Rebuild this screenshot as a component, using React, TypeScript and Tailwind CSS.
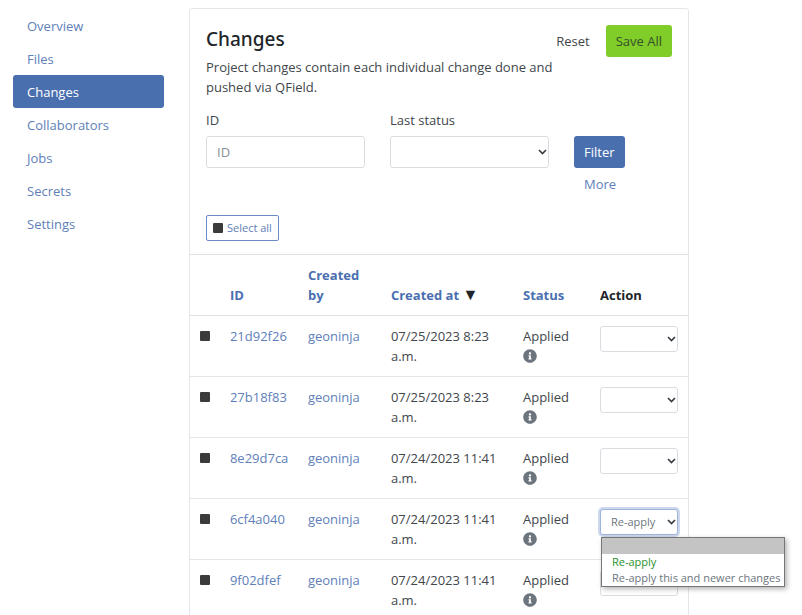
import React from "react";

const navItems = ["Overview", "Files", "Changes", "Collaborators", "Jobs", "Secrets", "Settings"];

const changes = [
  { id: "21d92f26", user: "geoninja", date: "07/25/2023 8:23 a.m.", status: "Applied" },
  { id: "27b18f83", user: "geoninja", date: "07/25/2023 8:23 a.m.", status: "Applied" },
  { id: "8e29d7ca", user: "geoninja", date: "07/24/2023 11:41 a.m.", status: "Applied" },
  { id: "6cf4a040", user: "geoninja", date: "07/24/2023 11:41 a.m.", status: "Applied", open: true },
  { id: "9f02dfef", user: "geoninja", date: "07/24/2023 11:41 a.m.", status: "Applied" },
];

function Chevron() {
  return (
    <svg
      className="pointer-events-none absolute top-1/2 right-[2px] -translate-y-1/2"
      width="9"
      height="7"
      viewBox="0 0 9 7"
      fill="none"
      stroke="#343a40"
      strokeWidth="1.6"
      aria-hidden="true"
    >
      <path d="M1 1.5 L4.5 5 L8 1.5" />
    </svg>
  );
}

function InfoIcon() {
  return (
    <svg width="14" height="14" viewBox="0 0 512 512" fill="#6c757d" aria-hidden="true">
      <path d="M256 8C119 8 8 119.100 8 256c0 137 111 248 248 248s248-111 248-248C504 119.100 393 8 256 8zm0 110c23.200 0 42 18.800 42 42s-18.800 42-42 42-42-18.800-42-42 18.800-42 42-42zm56 254c0 6.600-5.400 12-12 12h-88c-6.600 0-12-5.400-12-12v-24c0-6.600 5.400-12 12-12h12v-64h-12c-6.600 0-12-5.400-12-12v-24c0-6.600 5.400-12 12-12h64c6.600 0 12 5.400 12 12v100h12c6.600 0 12 5.400 12 12v24z" />
    </svg>
  );
}

function ActionMenu() {
  return (
    <ul
      role="listbox"
      aria-label="Action options"
      className="absolute top-7 left-px z-10 border border-[#767676] bg-white leading-4 text-[11px] whitespace-nowrap text-[#6c757d] shadow-[2px_2px_5px_rgba(0,0,0,0.3)]"
    >
      <li role="option" aria-selected="true" aria-label="No action" className="h-4 bg-[#c4c4c4]" />
      <li role="option" aria-selected="false" className="px-2.5 text-[#28912e]">Re-apply</li>
      <li role="option" aria-selected="false" className="pr-1 pl-2.5">Re-apply this and newer changes</li>
    </ul>
  );
}

export default function App() {
  return (
    <div className="flex h-screen items-start gap-[25px] overflow-hidden bg-white pt-2 pr-[113px] pl-[13px] font-['Open_Sans','Segoe_UI',sans-serif] text-[13px] leading-5 text-[#41464b]">
      <nav className="w-[151px] shrink-0 pt-px" aria-label="Project">
        {navItems.map((item) => (
          <a
            key={item}
            href={"#" + item.toLowerCase()}
            aria-current={item === "Changes" ? "page" : undefined}
            className={
              item === "Changes"
                ? "block rounded-[3px] bg-[#4a6fae] px-3.5 pt-[7px] pb-[6px] text-white"
                : "block px-3.5 pt-[7px] pb-[6px] text-[#6080b9]"
            }
          >
            {item}
          </a>
        ))}
      </nav>

      <main className="min-w-0 flex-1 rounded-[3px] border border-[#e4e6e8]">
        <header className="flex items-start justify-between px-4 pt-4">
          <div className="w-[350px]">
            <h1 className="font-['Noto_Sans','Segoe_UI',sans-serif] text-[19px] leading-7 font-medium text-[#212529]">Changes</h1>
            <p className="mt-1">Project changes contain each individual change done and pushed via QField.</p>
          </div>
          <div className="flex shrink-0 gap-4">
            <button type="button" className="h-8">Reset</button>
            <button type="button" className="h-8 rounded-[3px] bg-[#80cc28] px-2.5 text-[#35502a]">Save All</button>
          </div>
        </header>

        <form className="mt-[13px] flex gap-[25px] px-4">
          <div className="min-w-0 flex-1">
            <label htmlFor="filter-id" className="block">ID</label>
            <input
              id="filter-id"
              type="text"
              placeholder="ID"
              className="mt-1.5 block h-8 w-full rounded-[3px] border border-[#d9dde2] px-2.5 placeholder:text-[#868e96]"
            />
          </div>
          <div className="min-w-0 flex-1">
            <label htmlFor="filter-status" className="block">Last status</label>
            <div className="relative mt-1.5">
              <select
                id="filter-status"
                className="block h-8 w-full appearance-none rounded-[3px] border border-[#d9dde2] bg-white px-2.5"
              >
                <option></option>
              </select>
              <Chevron />
            </div>
          </div>
          <div className="w-[98px] pt-[26px]">
            <button type="button" className="block h-8 rounded-[3px] bg-[#4a6fae] px-2.5 text-white">Filter</button>
            <button type="button" className="mt-1.5 block px-2.5 text-[#6080b9]">More</button>
          </div>
        </form>

        <div className="px-4 pt-[21px] pb-[13px]">
          <button
            type="button"
            className="flex h-[26px] items-center gap-1 rounded-[2px] border border-[#6d8bc4] px-1.5 text-[11px] text-[#6080b9]"
          >
            <span className="size-2.5 rounded-[1px] bg-[#3b3b3b]" />
            Select all
          </button>
        </div>

        <table className="w-full table-fixed border-collapse text-left">
          <colgroup>
            <col className="w-[6%]" />
            <col className="w-[78px]" />
            <col className="w-[83px]" />
            <col className="w-[132px]" />
            <col className="w-[77px]" />
            <col className="w-[98px]" />
          </colgroup>
          <thead className="border-y border-[#dee2e6] align-bottom text-[#4a6fb0]">
            <tr>
              <th className="p-2.5" aria-label="Selected" />
              <th className="p-2.5"><a href="#sort-id">ID</a></th>
              <th className="p-2.5"><a href="#sort-user">Created by</a></th>
              <th className="p-2.5 whitespace-nowrap">
                <a href="#sort-date">Created at</a> <span className="text-[16px] text-[#212529]">▼</span>
              </th>
              <th className="p-2.5"><a href="#sort-status">Status</a></th>
              <th className="p-2.5 text-[#212529]">Action</th>
            </tr>
          </thead>
          <tbody className="align-top">
            {changes.map((change) => (
              <tr key={change.id} className="border-b border-[#e2e6ea]">
                <td className="px-2.5 py-[15px]">
                  <input
                    type="checkbox"
                    aria-label={"Select " + change.id}
                    className="block size-2.5 appearance-none rounded-[1px] bg-[#3b3b3b]"
                  />
                </td>
                <td className="p-2.5"><a href={"#" + change.id} className="text-[#6080b9]">{change.id}</a></td>
                <td className="p-2.5"><a href={"#" + change.user} className="text-[#6080b9]">{change.user}</a></td>
                <td className="p-2.5">{change.date}</td>
                <td className="p-2.5">
                  {change.status}
                  <div className="flex h-5 items-center"><InfoIcon /></div>
                </td>
                <td className="p-2.5">
                  <div className="relative">
                    <select
                      aria-label={"Action for " + change.id}
                      defaultValue={change.open ? "Re-apply" : ""}
                      className={
                        change.open
                          ? "block h-[26px] w-full appearance-none rounded-[3px] border border-[#9fb4dc] bg-white pl-2.5 text-[11px] text-[#6c757d] ring-2 ring-[#cdd8ec]"
                          : "block h-[26px] w-full appearance-none rounded-[3px] border border-[#d9dde2] bg-white pl-2.5 text-[11px] text-[#6c757d]"
                      }
                    >
                      <option></option>
                      <option>Re-apply</option>
                      <option>Re-apply this and newer changes</option>
                    </select>
                    <Chevron />
                    {change.open && <ActionMenu />}
                  </div>
                </td>
              </tr>
            ))}
          </tbody>
        </table>
      </main>
    </div>
  );
}
